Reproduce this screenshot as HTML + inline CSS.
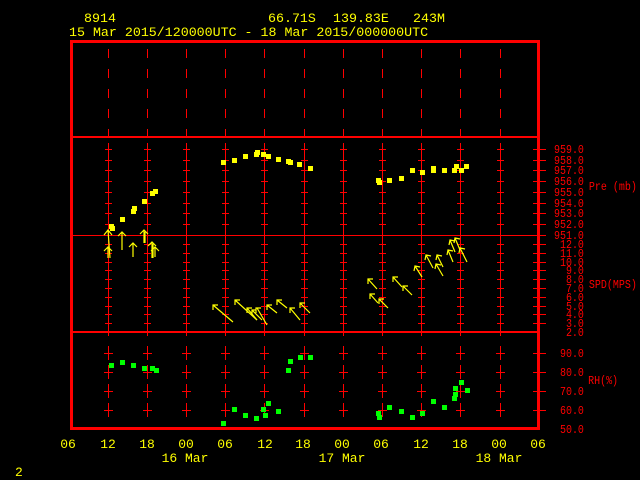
<!DOCTYPE html>
<html><head><meta charset="utf-8"><style>
html,body{margin:0;padding:0;background:#000;width:640px;height:480px;overflow:hidden}
svg{display:block}
text{font-family:"Liberation Mono",monospace}
</style></head><body>
<svg width="640" height="480" viewBox="0 0 640 480" xmlns="http://www.w3.org/2000/svg">
<defs>
<g id="col" stroke="#ff0000" stroke-width="1" fill="none" shape-rendering="crispEdges">
<path d="M0.5 49V58M0.5 69V78M0.5 89V98M0.5 109V118M0.5 129V137"/>
<path d="M0.5 143V155M-3 149.5H4M0.5 154V166M-3 160.5H4M0.5 164V176M-3 170.5H4M0.5 175V187M-3 181.5H4M0.5 186V198M-3 192.5H4M0.5 197V209M-3 203.5H4M0.5 207V219M-3 213.5H4M0.5 218V230M-3 224.5H4M0.5 229V240"/>
<path d="M0.5 240V336M-3 244.5H4M-3 253.5H4M-3 262.5H4M-3 270.5H4M-3 279.5H4M-3 288.5H4M-3 297.5H4M-3 306.5H4M-3 314.5H4M-3 323.5H4"/>
<path d="M0.5 346V360M-4 353.5H5M0.5 365V379M-4 372.5H5M0.5 384V398M-4 391.5H5M0.5 403V417M-4 410.5H5"/>
</g>
</defs>
<g fill="#ffff00" font-size="13.3">
<text x="84" y="22">8914</text>
<text x="268" y="22">66.71S</text>
<text x="333" y="22">139.83E</text>
<text x="413" y="22">243M</text>
<text x="69" y="36">15 Mar 2015/120000UTC - 18 Mar 2015/000000UTC</text>
</g>
<use href="#col" x="108"/><use href="#col" x="147"/><use href="#col" x="186"/><use href="#col" x="225"/><use href="#col" x="264"/><use href="#col" x="304"/><use href="#col" x="343"/><use href="#col" x="382"/><use href="#col" x="421"/><use href="#col" x="460"/><use href="#col" x="500"/>
<g stroke="#ff0000" fill="none" shape-rendering="crispEdges">
<rect x="71.5" y="41.5" width="467" height="387" stroke-width="3"/>
<path d="M71 137H539M71 332H539" stroke-width="2"/>
<path d="M71 235.5H539" stroke-width="1"/>
<path stroke-width="1" d="M533 149.5H546M533 160.5H546M533 170.5H546M533 181.5H546M533 192.5H546M533 203.5H546M533 213.5H546M533 224.5H546M533 235.5H546M533 244.5H546M533 253.5H546M533 262.5H546M533 270.5H546M533 279.5H546M533 288.5H546M533 297.5H546M533 306.5H546M533 314.5H546M533 323.5H546M533 353.5H546M533 372.5H546M533 391.5H546M533 410.5H546"/>
</g>
<g transform="scale(0.833,1)" fill="#ff0000" font-size="12">
<g text-anchor="end">
<text x="701" y="153">959.0</text><text x="701" y="164">958.0</text><text x="701" y="174">957.0</text><text x="701" y="185">956.0</text><text x="701" y="196">955.0</text><text x="701" y="207">954.0</text><text x="701" y="217">953.0</text><text x="701" y="228">952.0</text><text x="701" y="239">951.0</text>
<text x="701" y="248">12.0</text><text x="701" y="257">11.0</text><text x="701" y="266">10.0</text><text x="701" y="274">9.0</text><text x="701" y="283">8.0</text><text x="701" y="292">7.0</text><text x="701" y="301">6.0</text><text x="701" y="310">5.0</text><text x="701" y="318">4.0</text><text x="701" y="327">3.0</text><text x="701" y="336">2.0</text>
<text x="701" y="357">90.0</text><text x="701" y="376">80.0</text><text x="701" y="395">70.0</text><text x="701" y="414">60.0</text><text x="701" y="433">50.0</text>
</g>
<text x="707" y="190">Pre (mb)</text>
<text x="707" y="288">SPD(MPS)</text>
<text x="706" y="384">RH(%)</text>
</g>
<g fill="#ffff00">
<rect x="109" y="224" width="5" height="5"/><rect x="110" y="226" width="5" height="5"/><rect x="120" y="217" width="5" height="5"/><rect x="131" y="209" width="5" height="5"/><rect x="132" y="206" width="5" height="5"/><rect x="142" y="199" width="5" height="5"/><rect x="150" y="191" width="5" height="5"/><rect x="153" y="189" width="5" height="5"/>
<rect x="221" y="160" width="5" height="5"/><rect x="232" y="158" width="5" height="5"/><rect x="243" y="154" width="5" height="5"/><rect x="255" y="150" width="5" height="5"/><rect x="254" y="152" width="5" height="5"/><rect x="261" y="152" width="5" height="5"/><rect x="266" y="154" width="5" height="5"/><rect x="276" y="157" width="5" height="5"/><rect x="286" y="159" width="5" height="5"/><rect x="288" y="160" width="5" height="5"/><rect x="297" y="162" width="5" height="5"/><rect x="308" y="166" width="5" height="5"/>
<rect x="376" y="178" width="5" height="5"/><rect x="377" y="180" width="5" height="5"/><rect x="387" y="178" width="5" height="5"/><rect x="399" y="176" width="5" height="5"/><rect x="410" y="168" width="5" height="5"/><rect x="420" y="170" width="5" height="5"/><rect x="431" y="166" width="5" height="5"/><rect x="431" y="168" width="5" height="5"/><rect x="442" y="168" width="5" height="5"/><rect x="452" y="168" width="5" height="5"/><rect x="454" y="164" width="5" height="5"/><rect x="459" y="168" width="5" height="5"/><rect x="464" y="164" width="5" height="5"/>
</g>
<g stroke="#ffff00" stroke-width="1.2" fill="none">
<path d="M110 258L108 230M104 235L108 230L112 235"/>
<path d="M122 250V232M118 236L122 232L126 236"/>
<path d="M133 257V243M129 247L133 243L137 247"/>
<path d="M144 243V230M140 234L144 230L148 234M145 243V232"/>
<path d="M152 258V242M148 246L152 242L156 246M153 258V244"/>
<path d="M155 257V247M151 251L155 247L159 251"/>
<path d="M108 258V247M104 251L108 247L112 251"/>
<path d="M233 322L213 305M213 310V305H218"/>
<path d="M257 320L235 300M235 305V300H240"/>
<path d="M257 320L247 308M247 313V308H252"/>
<path d="M267 325L257 308M256 313V308H261"/>
<path d="M262 320L252 310M252 314V310H256"/>
<path d="M277 313L267 305M267 310V305H272"/>
<path d="M287 308L277 300M277 305V300H282"/>
<path d="M300 320L290 308M290 313V308H295"/>
<path d="M310 313L300 303M300 308V303H305"/>
<path d="M377 289L368 279M368 284V279H373"/>
<path d="M402 287L393 277M393 282V277H398"/>
<path d="M412 295L403 286M403 291V286H408"/>
<path d="M378 303L370 294M370 299V294H375"/>
<path d="M388 308L379 299M379 304V299H384"/>
<path d="M422 277L415 266M414 271L415 266L420 267"/>
<path d="M433 268L426 255M425 260L426 255L431 256"/>
<path d="M443 267L437 255M436 260L437 255L442 256"/>
<path d="M443 276L436 264M435 269L436 264L441 265"/>
<path d="M455 252L450 240M449 245L450 240L455 241"/>
<path d="M460 250L455 238M454 243L455 238L460 239"/>
<path d="M453 262L448 250M447 255L448 250L453 251"/>
<path d="M467 262L460 248M459 253L460 248L465 249"/>
</g>
<g fill="#00ff00">
<rect x="109" y="363" width="5" height="5"/><rect x="120" y="360" width="5" height="5"/><rect x="131" y="363" width="5" height="5"/><rect x="142" y="366" width="5" height="5"/><rect x="150" y="366" width="5" height="5"/><rect x="154" y="368" width="5" height="5"/>
<rect x="221" y="421" width="5" height="5"/><rect x="232" y="407" width="5" height="5"/><rect x="243" y="413" width="5" height="5"/><rect x="254" y="416" width="5" height="5"/><rect x="261" y="407" width="5" height="5"/><rect x="266" y="401" width="5" height="5"/><rect x="263" y="413" width="5" height="5"/><rect x="276" y="409" width="5" height="5"/><rect x="286" y="368" width="5" height="5"/><rect x="288" y="359" width="5" height="5"/><rect x="298" y="355" width="5" height="5"/><rect x="308" y="355" width="5" height="5"/>
<rect x="376" y="411" width="5" height="5"/><rect x="377" y="415" width="5" height="5"/><rect x="387" y="405" width="5" height="5"/><rect x="399" y="409" width="5" height="5"/><rect x="410" y="415" width="5" height="5"/><rect x="420" y="411" width="5" height="5"/><rect x="431" y="399" width="5" height="5"/><rect x="442" y="405" width="5" height="5"/><rect x="452" y="396" width="5" height="5"/><rect x="453" y="392" width="5" height="5"/><rect x="453" y="386" width="5" height="5"/><rect x="459" y="380" width="5" height="5"/><rect x="465" y="388" width="5" height="5"/>
</g>
<g fill="#ffff00" font-size="13" text-anchor="middle">
<text x="68" y="448">06</text><text x="108" y="448">12</text><text x="147" y="448">18</text><text x="186" y="448">00</text><text x="225" y="448">06</text><text x="265" y="448">12</text><text x="303" y="448">18</text><text x="342" y="448">00</text><text x="381" y="448">06</text><text x="421" y="448">12</text><text x="460" y="448">18</text><text x="499" y="448">00</text><text x="538" y="448">06</text>
<text x="185" y="462">16 Mar</text><text x="342" y="462">17 Mar</text><text x="499" y="462">18 Mar</text>
</g>
<text x="15" y="476" fill="#ffff00" font-size="13">2</text>
</svg>
</body></html>
